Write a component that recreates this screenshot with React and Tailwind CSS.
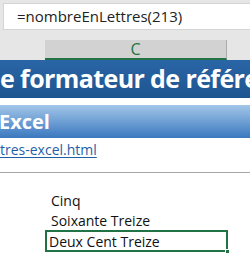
export default function App() {
  return (
    <div className="w-[250px] h-[266px] overflow-hidden bg-white font-['Open_Sans',sans-serif]">
      {/* formula bar */}
      <div className="h-[40px] bg-[#e6e6e6] pt-[3px] pl-[3px]">
        <div className="h-[27px] bg-white border border-r-0 border-[#d4d4d4] flex items-center pl-[13px] text-[15px] text-[#222] whitespace-nowrap">
          =nombreEnLettres(213)
        </div>
      </div>

      {/* column header */}
      <div className="flex h-[20px] bg-[#e6e6e6]">
        <div className="w-[45px]" />
        <div className="w-[182px] bg-[#d2d2d2] border-b-2 border-[#217346] border-r border-r-[#ababab] flex items-center justify-center text-[16px] text-[#217346] leading-none">
          C
        </div>
      </div>

      {/* sheet content */}
      <div className="h-[38px] bg-gradient-to-b from-[#2a65a6] to-[#1d5590] flex items-center overflow-hidden whitespace-nowrap">
        <span className="text-white font-bold text-[25px] tracking-[-0.6px]">e formateur de référe</span>
      </div>
      <div className="h-[7px]" />
      <div className="h-[33px] bg-gradient-to-b from-[#a2c6e8] to-[#3a78bf] flex items-center overflow-hidden">
        <span className="text-white font-bold text-[20px] -ml-[1px]">Excel</span>
      </div>
      <div className="h-[22px] flex items-center">
        <span className="text-[#1f5fa8] underline text-[14px] underline-offset-2">tres-excel.html</span>
      </div>
      <div className="h-[12px]" />
      <div className="border-t border-[#a6a6a6]" />

      {/* cells */}
      <div className="pt-[17px] text-[14px] text-[#111]">
        <div className="h-[20px] pl-[51px] flex items-center">Cinq</div>
        <div className="h-[20px] pl-[51px] flex items-center">Soixante Treize</div>
        <div className="relative ml-[45px] w-[183px] h-[22px] border-2 border-[#217346] pl-[2px] flex items-center">
          Deux Cent Treize
          <div className="absolute -right-[4px] -bottom-[4px] w-[5px] h-[5px] bg-[#217346] border border-white" />
        </div>
      </div>
    </div>
  );
}
